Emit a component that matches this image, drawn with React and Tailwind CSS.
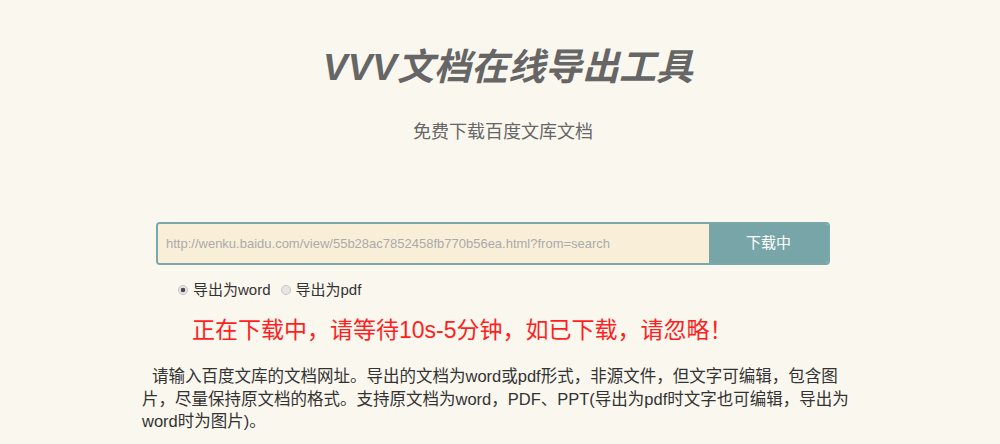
import React, { useState } from "react";

const font = "font-['Liberation_Sans','Noto_Sans_CJK_SC',sans-serif]";

function Radio({ label, checked, onChange }) {
  return (
    <label className="flex items-center gap-[5px]">
      <input
        type="radio"
        name="format"
        checked={checked}
        onChange={onChange}
        className="h-[10px] w-[10px] appearance-none rounded-full border border-[#c4c4c4] bg-[#e6e6e6] checked:bg-[radial-gradient(circle,#4a4a4a_0,#4a4a4a_2px,#e6e6e6_2.6px)]"
      />
      {label}
    </label>
  );
}

export default function App() {
  const [format, setFormat] = useState("word");

  return (
    <div className={`min-h-[444px] bg-[#faf7ef] ${font}`}>
      <div className="mx-auto w-[720px] pt-[44px]">
        <h1 className="pl-[16px] text-center text-[37px] leading-[48px] font-bold italic text-[#666]">
          VVV文档在线导出工具
        </h1>
        <p className="mt-[28px] pl-[6px] text-center text-[18px] leading-[24px] text-[#666]">
          免费下载百度文库文档
        </p>

        <form className="mt-[78px] ml-4 w-[674px]" onSubmit={(e) => e.preventDefault()}>
          <div className="flex h-[43px] overflow-hidden rounded-[4px] border-2 border-[#7aa8aa]">
            <input
              type="text"
              placeholder="http://wenku.baidu.com/view/55b28ac7852458fb770b56ea.html?from=search"
              className="flex-1 bg-[#f9efd9] px-[8px] text-[13px] text-[#555] outline-none placeholder:text-[#aaa]"
            />
            <button
              type="submit"
              className="w-[119px] bg-[#78a6a8] text-[15px] text-white"
            >
              下载中
            </button>
          </div>

          <div className="mt-[15px] flex h-[20px] items-center gap-[10px] pl-[22px] text-[15px] text-[#333]">
            <Radio label="导出为word" checked={format === "word"} onChange={() => setFormat("word")} />
            <Radio label="导出为pdf" checked={format === "pdf"} onChange={() => setFormat("pdf")} />
          </div>
        </form>

        <p className="mt-[15px] pl-[52px] text-[23px] leading-[30px] text-[#ff1f1f]">
          正在下载中，请等待10s-5分钟，如已下载，请忽略！
        </p>

        <p className="mt-[20px] ml-[2px] w-[714px] indent-[10px] text-[16.5px] leading-[22.5px] text-[#333]">
          请输入百度文库的文档网址。导出的文档为word或pdf形式，非源文件，但文字可编辑，包含图片，尽量保持原文档的格式。支持原文档为word，PDF、PPT(导出为pdf时文字也可编辑，导出为word时为图片)。
        </p>
      </div>
    </div>
  );
}
